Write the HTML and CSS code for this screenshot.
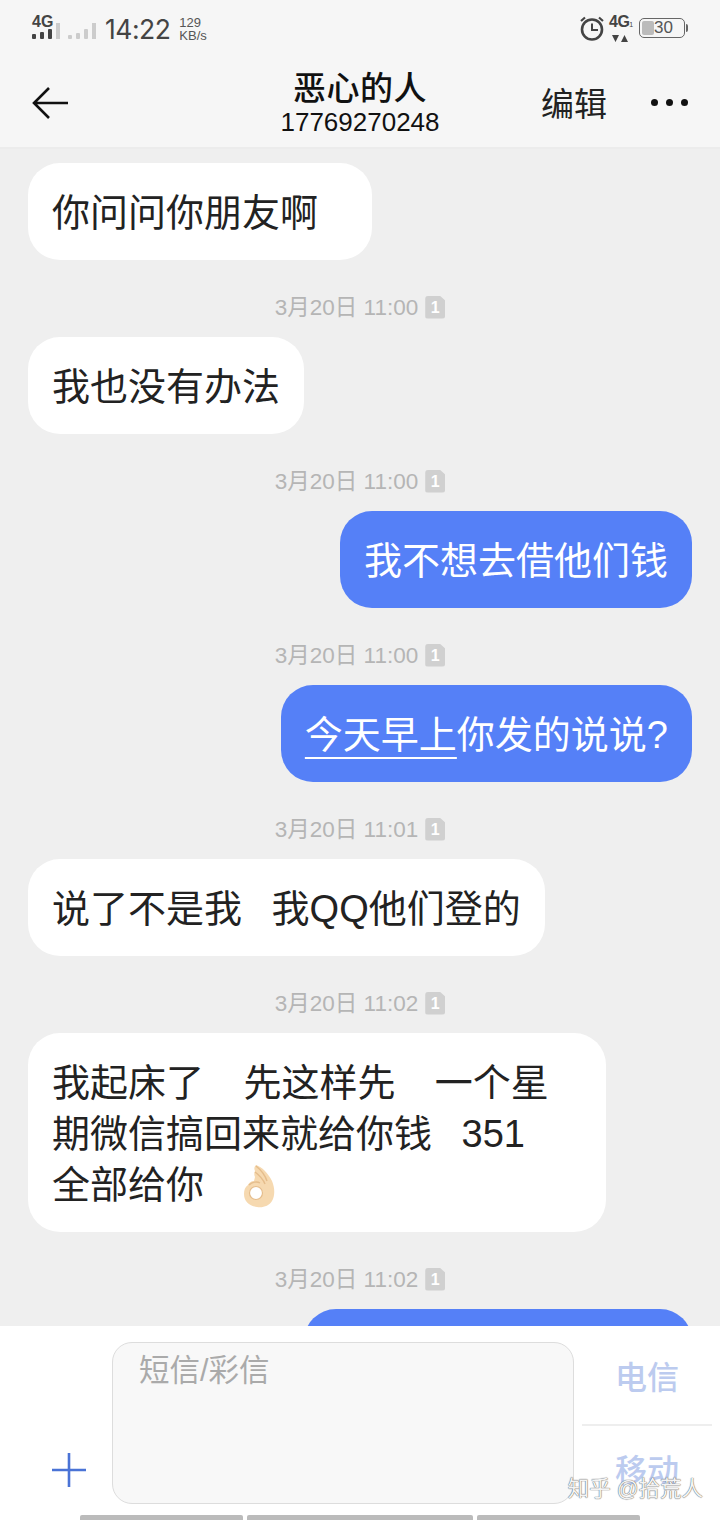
FILE: index.html
```html
<!DOCTYPE html>
<html lang="zh-CN">
<head>
<meta charset="utf-8">
<title>恶心的人</title>
<link rel="stylesheet" href="styles.css">
</head>
<body>
<div class="app">
  <header class="top">
    <div class="status">
      <div class="status-left">
        <div class="sig">
          <span class="sig-label">4G</span>
          <svg class="sig-bars" width="28" height="24" viewBox="0 0 28 24"><rect x="0" y="18" width="4" height="5" rx="1" fill="#444"/><rect x="8" y="16" width="4" height="7" rx="1" fill="#444"/><rect x="16" y="13" width="4" height="10" rx="1" fill="#444"/><rect x="24" y="7" width="4" height="16" fill="#ccc"/></svg>
        </div>
        <svg class="sig2" width="30" height="18" viewBox="0 0 30 18"><rect x="0" y="13" width="4" height="4" rx="1" fill="#ccc"/><rect x="8" y="11" width="4" height="6" rx="1" fill="#ccc"/><rect x="16" y="7" width="4" height="10" rx="1" fill="#ccc"/><rect x="24" y="1" width="4" height="16" fill="#ccc"/></svg>
        <span class="time">14:22</span>
        <span class="speed"><span>129</span><span>KB/s</span></span>
      </div>
      <div class="status-right">
        <svg class="alarm" width="26" height="26" viewBox="0 0 26 26"><circle cx="13" cy="14.500" r="10" fill="none" stroke="#444" stroke-width="2.600"/><path d="M13 8.500v6.500h6" fill="none" stroke="#444" stroke-width="2"/><path d="M2 6l4-3.500M24 6l-4-3.500" stroke="#444" stroke-width="2.200" fill="none"/></svg>
        <div class="net">
          <span class="net-label">4G<small>1</small></span>
          <svg width="16" height="7" viewBox="0 0 16 7"><path d="M0 0h7L3.500 7zM9 7l3.500-7L16 7z" fill="#444"/></svg>
        </div>
        <div class="battery"><span class="battery-fill"></span><span class="battery-num">30</span></div>
        <span class="battery-tip"></span>
      </div>
    </div>
    <nav class="nav">
      <svg class="back" width="38" height="34" viewBox="0 0 38 34"><path d="M18 2L3 17l15 15M3 17h34" fill="none" stroke="#111" stroke-width="2.600"/></svg>
      <div class="contact">
        <div class="contact-name">恶心的人</div>
        <div class="contact-num">17769270248</div>
      </div>
      <span class="edit">编辑</span>
      <span class="dots"><i></i><i></i><i></i></span>
    </nav>
  </header>

  <main class="thread">
    <div class="bubble in">你问问你朋友啊   </div>

    <div class="stamp">3月20日 11:00<span class="sim">1</span></div>
    <div class="bubble in">我也没有办法</div>

    <div class="stamp">3月20日 11:00<span class="sim">1</span></div>
    <div class="bubble out">我不想去借他们钱</div>

    <div class="stamp">3月20日 11:00<span class="sim">1</span></div>
    <div class="bubble out"><span class="link">今天早上</span>你发的说说?</div>

    <div class="stamp">3月20日 11:01<span class="sim">1</span></div>
    <div class="bubble in">说了不是我   我QQ他们登的</div>

    <div class="stamp">3月20日 11:02<span class="sim">1</span></div>
    <div class="bubble in wide">我起床了    先这样先    一个星<br>期微信搞回来就给你钱   351<br>全部给你   <svg class="emoji" width="36" height="46" viewBox="0 0 36 46"><path d="M15 2c6 2 12 8 16 16 3 7 3 15 0 20-3 5-9 7-15 6C8 43 3 38 3 31c0-4 1-7 4-9 1-2 3-4 6-4l1-4c-1-2-1-4 0-6-1-2-1-4 1-6z" fill="#f6d9b0"/><path d="M15 3c5 4 9 9 11 15M14 9c4 3 8 7 10 12M8 22c3-3 8-4 11-2" fill="none" stroke="#e5bd8c" stroke-width="1.500"/><circle cx="15" cy="30" r="6.500" fill="#fff"/><circle cx="15" cy="30" r="6.500" fill="none" stroke="#e5bd8c" stroke-width="1.200"/></svg></div>

    <div class="stamp">3月20日 11:02<span class="sim">1</span></div>
    <div class="bubble out cut"></div>
  </main>

  <footer class="composer">
    <div class="compose-row">
      <div class="plus-col">
        <svg width="34" height="34" viewBox="0 0 34 34"><path d="M17 0v34M0 17h34" stroke="#4a73d6" stroke-width="2.600"/></svg>
      </div>
      <div class="input">短信/彩信</div>
      <div class="sims">
        <div class="sim-btn">电信</div>
        <div class="sim-btn">移动</div>
      </div>
    </div>
    <div class="home-bar"><span class="seg-a"></span><span class="seg-b"></span><span class="seg-a"></span></div>
    <div class="watermark">知乎 @拾荒人</div>
  </footer>
</div>
</body>
</html>
```
FILE: styles.css
```css
* { box-sizing: border-box; }
html, body { margin: 0; padding: 0; }
body {
  width: 720px;
  height: 1520px;
  overflow: hidden;
  background: #efefef;
  font-family: "Liberation Sans", "Noto Sans CJK SC", sans-serif;
  color: #222;
}
.app { height: 1520px; display: flex; flex-direction: column; position: relative; }

.top { height: 149px; flex: none; background: #f6f6f6; border-bottom: 2px solid #ececec; }
.status { height: 58px; padding: 14px 32px 0 32px; display: flex; justify-content: space-between; }
.status-left { display: flex; align-items: flex-start; }
.sig { position: relative; width: 28px; height: 26px; }
.sig-label { position: absolute; left: 0; top: 1px; font: bold 16px/14px "Liberation Sans", sans-serif; color: #444; }
.sig-bars { position: absolute; left: 0; top: 2px; }
.sig2 { margin: 8px 0 0 8px; }
.time { margin-left: 7px; font: 26.500px/30px "Inter", "Liberation Sans", sans-serif; color: #444; letter-spacing: -0.500px; }
.speed { margin: 2px 0 0 9px; display: flex; flex-direction: column; font: 13px/13px "Liberation Sans", sans-serif; color: #555; }
.status-right { display: flex; align-items: flex-start; }
.alarm { margin: 1px 4px 0 0; }
.net { width: 30px; display: flex; flex-direction: column; }
.net-label { font: bold 16px/16px "Liberation Sans", sans-serif; color: #444; letter-spacing: -0.500px; }
.net-label small { font-size: 7px; font-weight: normal; }
.net svg { margin: 2px 0 0 3px; }
.battery { position: relative; width: 46px; height: 20px; margin-top: 4px; border: 1px solid #666; border-radius: 5px; display: flex; align-items: center; justify-content: center; }
.battery-fill { position: absolute; left: 2px; top: 2px; bottom: 2px; width: 12px; background: #bbb; border-radius: 2px; }
.battery-num { position: relative; font: 17px/18px "Liberation Sans", sans-serif; color: #555; padding-left: 3px; }
.battery-tip { width: 2px; height: 8px; margin: 10px 0 0 1px; background: #666; border-radius: 0 2px 2px 0; }

.nav { height: 89px; display: flex; align-items: flex-start; position: relative; padding: 0 32px 0 31px; }
.back { margin-top: 28px; }
.contact { position: absolute; left: 0; right: 0; top: 13px; text-align: center; }
.contact-name { font-size: 33px; line-height: 36px; font-weight: 500; color: #111; letter-spacing: 0.500px; }
.contact-num { font: 26px/30px "Liberation Sans", sans-serif; color: #111; }
.edit { margin: 25px 0 0 auto; font-size: 33px; line-height: 44px; color: #222; }
.dots { margin: 41px 0 0 44px; display: flex; gap: 8px; }
.dots i { width: 7px; height: 7px; border-radius: 50%; background: #111; }

.thread { flex: 1; min-height: 0; overflow: hidden; padding: 14px 28px 0; display: flex; flex-direction: column; align-items: flex-start; }
.bubble {
  flex: none;
  max-width: 578px;
  padding: 25px 24px 21px;
  border-radius: 32px;
  font-size: 38px;
  line-height: 51px;
  word-spacing: -0.700px;
  white-space: pre;
  background: #fff;
  color: #222;
}
.bubble.out { align-self: flex-end; background: #5580f7; color: #fff; }
.wide { width: 578px; }
.cut { width: 388px; height: 97px; }
.link { text-decoration: underline; text-decoration-thickness: 2px; text-underline-offset: 9px; }
.emoji { vertical-align: middle; margin: -14px 0 -10px 7px; }

.stamp { flex: none; align-self: center; height: 24px; padding-top: 2px; margin: 35px 0 18px; display: flex; align-items: center; gap: 7px; font-size: 22.500px; line-height: 24px; color: #b5b5b5; }
.sim { width: 20px; height: 23px; margin-top: -2px; border-radius: 3px; background: #d0d0d0; color: #fff; font: bold 16px/23px "Liberation Sans", sans-serif; text-align: center; clip-path: polygon(0 0, 72% 0, 100% 22%, 100% 100%, 0 100%); }

.composer { flex: none; position: relative; height: 194px; background: #fff; padding-top: 16px; }
.compose-row { display: flex; height: 162px; }
.plus-col { width: 112px; flex: none; padding: 111px 0 0 52px; }
.plus-col svg { display: block; }
.input { width: 462px; flex: none; background: #f8f8f8; border: 1px solid #ddd; border-radius: 20px; padding: 7px 26px; font-size: 30.500px; line-height: 40px; color: #aaa; }
.sims { flex: none; width: 130px; margin-left: 8px; display: flex; flex-direction: column; }
.sim-btn { flex: none; height: 84px; text-align: center; font-size: 32px; line-height: 73px; font-weight: 500; color: #bccbef; }
.sim-btn:first-child { border-bottom: 2px solid #eee; }
.sim-btn + .sim-btn { height: 78px; line-height: 90px; }
.home-bar { margin: 11px 0 0 80px; display: flex; gap: 4px; height: 5px; }
.home-bar span { height: 5px; background: #bbb; border-radius: 2px 2px 0 0; }
.seg-a { width: 163px; }
.seg-b { width: 226px; }
.watermark { position: absolute; right: 17px; top: 148px; font-size: 21.500px; line-height: 30px; color: #f4f4f4; text-shadow: 0 0 1px #555, 0 0 1px #777; }
```
